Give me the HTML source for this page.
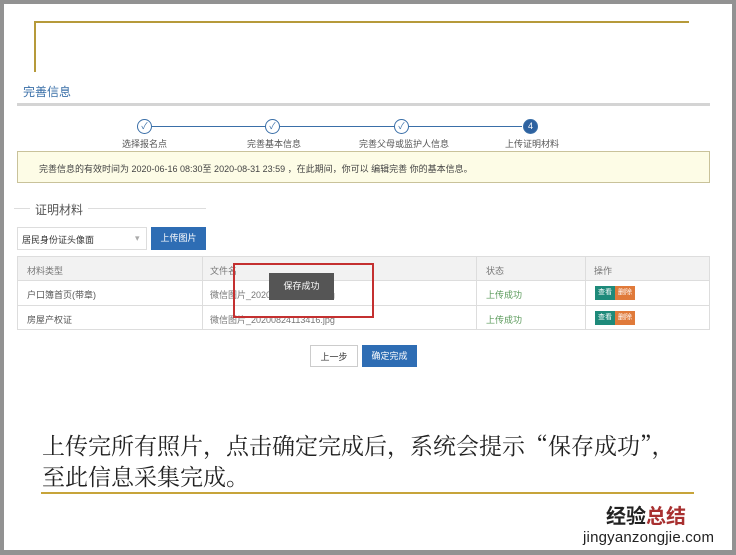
<!DOCTYPE html>
<html><head><meta charset="utf-8"><style>
*{margin:0;padding:0;box-sizing:border-box}
body{width:736px;height:555px;background:#929292;position:relative;overflow:hidden;font-family:"Liberation Sans","Noto Sans CJK SC",sans-serif}
.pg{position:absolute;left:4px;top:4px;width:728px;height:546px;background:#fff}
.a{position:absolute}
.t{font-size:9px;color:#555;white-space:nowrap}
.c{width:15px;height:15px;border-radius:50%;border:1px solid #3a6fa8;background:#fff;font-size:9px;color:#3a6fa8;text-align:center;line-height:13px}
.btn{color:#fff;font-size:9px;text-align:center}
</style></head><body>
<div class="pg"></div>
<div class="a" style="left:34px;top:21px;width:655px;height:2px;background:#b69a3a"></div>
<div class="a" style="left:34px;top:21px;width:2px;height:51px;background:#b69a3a"></div>
<div class="a" style="left:23px;top:83px;font-size:12px;color:#3a6fa8">完善信息</div>
<div class="a" style="left:17px;top:103px;width:693px;height:3px;background:#d4d4d4"></div>
<div class="a" style="left:152px;top:126px;width:370px;height:1px;background:#3a6fa8"></div>
<div class="a c" style="left:137px;top:119px">✓</div>
<div class="a c" style="left:265px;top:119px">✓</div>
<div class="a c" style="left:394px;top:119px">✓</div>
<div class="a c" style="left:523px;top:119px;background:#2e62a0;color:#fff">4</div>
<div class="a t" style="left:122px;top:137px">选择报名点</div>
<div class="a t" style="left:247px;top:137px">完善基本信息</div>
<div class="a t" style="left:359px;top:137px">完善父母或监护人信息</div>
<div class="a t" style="left:505px;top:137px">上传证明材料</div>
<div class="a" style="left:17px;top:151px;width:693px;height:32px;background:#fdfce6;border:1px solid #c9c29a"></div>
<div class="a t" style="left:39px;top:162px;color:#444">完善信息的有效时间为 2020-06-16 08:30至 2020-08-31 23:59 ，在此期间，你可以 编辑完善 你的基本信息。</div>
<div class="a" style="left:14px;top:208px;width:192px;height:1px;background:#ddd"></div>
<div class="a" style="left:30px;top:201px;padding:0 5px;background:#fff;font-size:12px;color:#555">证明材料</div>
<div class="a" style="left:17px;top:227px;width:130px;height:23px;border:1px solid #ddd"></div>
<div class="a t" style="left:22px;top:233px;color:#333">居民身份证头像面</div>
<div class="a t" style="left:135px;top:233px;color:#aaa">▾</div>
<div class="a btn" style="left:151px;top:227px;width:55px;height:23px;line-height:23px;background:#2e6db4">上传图片</div>
<div class="a" style="left:17px;top:256px;width:693px;height:74px;border:1px solid #ddd"></div>
<div class="a" style="left:18px;top:257px;width:691px;height:23px;background:#f2f2f2"></div>
<div class="a" style="left:18px;top:305px;width:691px;height:1px;background:#ddd"></div>
<div class="a" style="left:18px;top:280px;width:691px;height:1px;background:#ddd"></div>
<div class="a" style="left:202px;top:257px;width:1px;height:72px;background:#ddd"></div>
<div class="a" style="left:476px;top:257px;width:1px;height:72px;background:#ddd"></div>
<div class="a" style="left:585px;top:257px;width:1px;height:72px;background:#ddd"></div>
<div class="a t" style="left:27px;top:264px;color:#777">材料类型</div>
<div class="a t" style="left:210px;top:264px;color:#777">文件名</div>
<div class="a t" style="left:486px;top:264px;color:#777">状态</div>
<div class="a t" style="left:594px;top:264px;color:#777">操作</div>
<div class="a t" style="left:27px;top:288px">户口簿首页(带章)</div>
<div class="a t" style="left:210px;top:288px;color:#777">微信图片_20200824113339.jpg</div>
<div class="a t" style="left:486px;top:288px;color:#5a9a5a">上传成功</div>
<div class="a t" style="left:27px;top:313px">房屋产权证</div>
<div class="a t" style="left:210px;top:313px;color:#777">微信图片_20200824113416.jpg</div>
<div class="a t" style="left:486px;top:313px;color:#5a9a5a">上传成功</div>
<div class="a btn" style="left:595px;top:286px;width:20px;height:14px;line-height:14px;font-size:7px;background:#1e8a7a">查看</div>
<div class="a btn" style="left:615px;top:286px;width:20px;height:14px;line-height:14px;font-size:7px;background:#e07a3a">删除</div>
<div class="a btn" style="left:595px;top:311px;width:20px;height:14px;line-height:14px;font-size:7px;background:#1e8a7a">查看</div>
<div class="a btn" style="left:615px;top:311px;width:20px;height:14px;line-height:14px;font-size:7px;background:#e07a3a">删除</div>
<div class="a" style="left:233px;top:263px;width:141px;height:55px;border:2px solid #c43030"></div>
<div class="a btn" style="left:269px;top:273px;width:65px;height:27px;line-height:27px;background:#555">保存成功</div>
<div class="a t" style="left:310px;top:345px;width:48px;height:22px;line-height:22px;border:1px solid #ccc;text-align:center;color:#333">上一步</div>
<div class="a btn" style="left:362px;top:345px;width:55px;height:22px;line-height:22px;background:#2e6db4">确定完成</div>
<div class="a" style="left:42px;top:429px;font-size:23px;line-height:31px;color:#222;white-space:nowrap;font-family:'Noto Serif CJK SC','Liberation Serif',serif">上传完所有照片，点击确定完成后，系统会提示“保存成功”，<br>至此信息采集完成。</div>
<div class="a" style="left:41px;top:492px;width:653px;height:2px;background:#c7a43a"></div>
<div class="a" style="left:606px;top:505px;font-size:20px;font-weight:bold;color:#222;line-height:24px">经验<span style="color:#a83030">总结</span></div>
<div class="a" style="left:583px;top:529px;font-size:15px;color:#222;letter-spacing:0.2px">jingyanzongjie.com</div>
</body></html>
